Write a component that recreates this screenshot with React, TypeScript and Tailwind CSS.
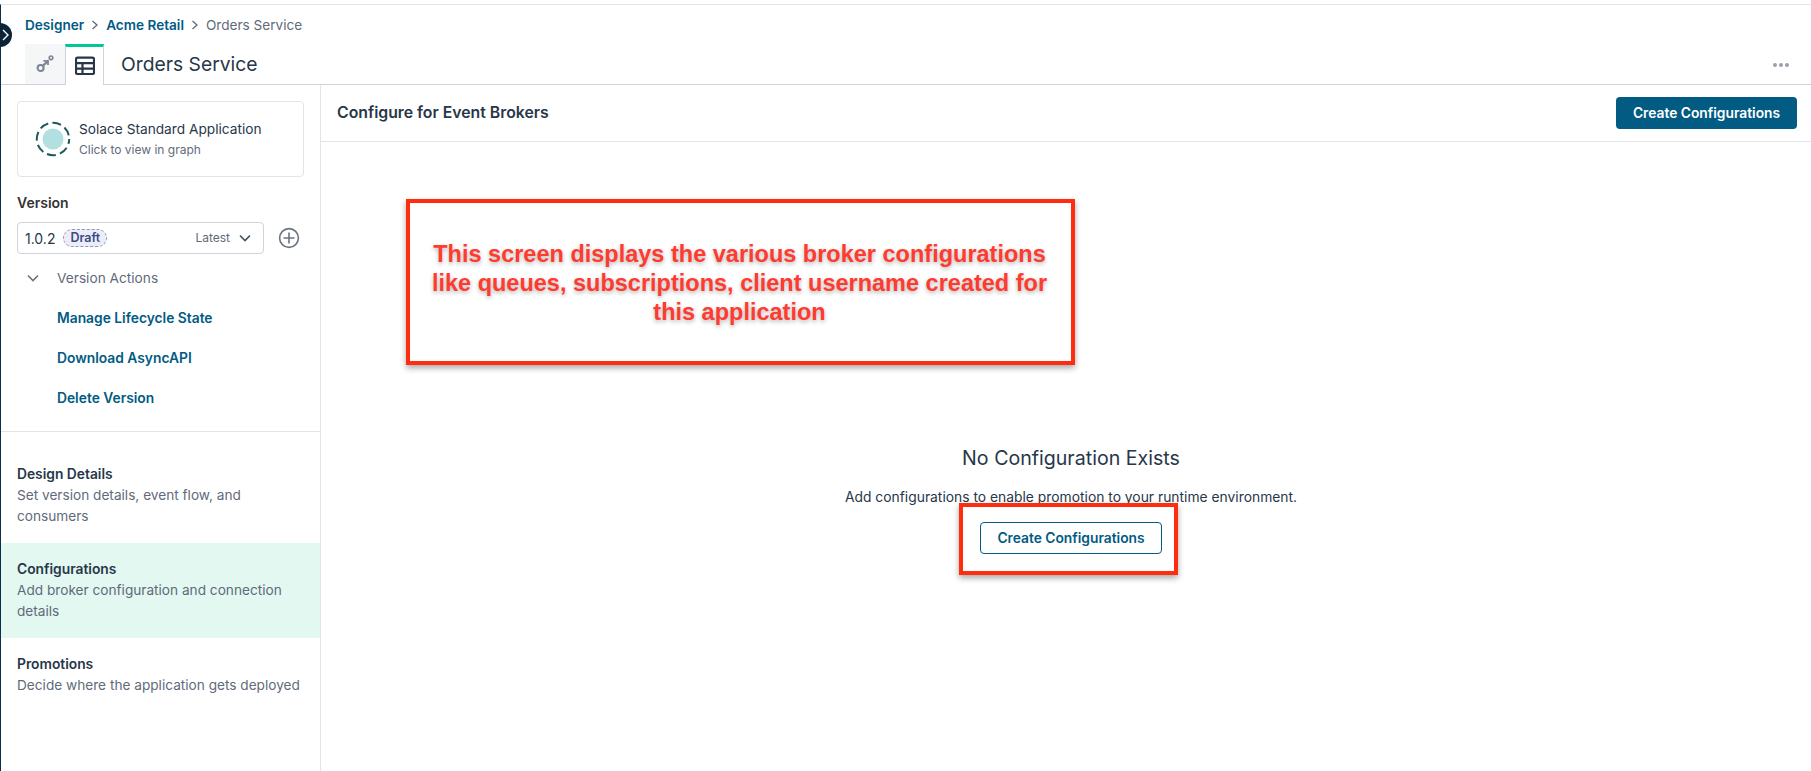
function GraphIcon() {
  return (
    <svg width="20" height="20" viewBox="0 0 20 20" fill="none" stroke="#7d8794" strokeWidth="2.1">
      <circle cx="5.6" cy="14" r="3" />
      <circle cx="16" cy="3.8" r="1.8" strokeWidth="1.6" />
      <path d="M8 11.6 L12.4 7.6" />
      <path d="M8.4 6.8 H13 V11" strokeWidth="1.8" />
    </svg>
  );
}

function TableIcon() {
  return (
    <svg width="20" height="20" viewBox="0 0 20 20" fill="none" stroke="#273749" strokeWidth="2.2">
      <rect x="1" y="1.6" width="18" height="16.4" rx="1.5" />
      <path d="M1 7.2H19M1 12.6H19M7.5 7.2V18" />
    </svg>
  );
}

function Chevron({ color = "#5f6b7a", size = 12 }: { color?: string; size?: number }) {
  return (
    <svg width={size} height={size} viewBox="0 0 12 12" fill="none" stroke={color} strokeWidth="1.6">
      <path d="M1 3.5 L6 8.5 L11 3.5" />
    </svg>
  );
}

function Sep() {
  return (
    <svg width="8" height="10" viewBox="0 0 8 10" fill="none" stroke="#5f6b7a" strokeWidth="1.3" className="mx-[7px]">
      <path d="M1.5 1 L6 5 L1.5 9" />
    </svg>
  );
}

function StandardIcon() {
  return (
    <svg width="36" height="36" viewBox="0 0 36 36" fill="none">
      <circle cx="18" cy="18" r="10.5" fill="#b2dfdf" />
      <circle cx="18" cy="18" r="16.2" stroke="#1d5b5e" strokeWidth="2" strokeDasharray="9 4.2" strokeDashoffset="4" />
    </svg>
  );
}

function NavItem({ title, lines, active }: { title: string; lines: string[]; active?: boolean }) {
  return (
    <div className={`pl-4 pr-2 pt-[16px] pb-[16px] ${active ? "bg-[#e3f8f1]" : ""}`}>
      <div className="text-[13.8px] leading-[21px] font-semibold text-[#273749]">{title}</div>
      <div className="text-[13.65px] leading-[21px] text-[#5f6b7a]">
        {lines.map((l) => (
          <div key={l}>{l}</div>
        ))}
      </div>
    </div>
  );
}

export default function App() {
  return (
    <div className="relative h-screen w-full overflow-hidden bg-white font-['Inter',sans-serif] text-[#273749] pt-1">
      <div className="flex h-full flex-col border-t border-[#e2e4e8] border-l border-l-[#0c2f4e]">
        <header className="relative h-[80px] shrink-0 border-b border-[#d0d3dc]">
          <div className="flex h-[39px] items-center pl-[24px] text-[13.6px] leading-[20px]">
            <span className="font-semibold text-[#015b82]">Designer</span>
            <Sep />
            <span className="font-semibold text-[#015b82]">Acme Retail</span>
            <Sep />
            <span className="text-[#5f6b7a]">Orders Service</span>
          </div>
          <div className="flex h-10 items-stretch pl-[24px]">
            <div className="flex w-10 items-center justify-center bg-[#f5f6f8]"><GraphIcon /></div>
            <div className="relative -mb-px flex w-[39px] items-center justify-center border-x border-[#d0d3dc] border-t-[3px] border-t-[#00c895] bg-white"><TableIcon /></div>
            <div className="flex items-center pl-[17px] text-[19.3px] leading-[28px] text-[#273749]">Orders Service</div>
            <div className="ml-auto mr-[22px] flex items-center gap-[2px] pt-[2px]">
              <span className="h-[4px] w-[4px] rounded-full bg-[#9aa1ad]" />
              <span className="h-[4px] w-[4px] rounded-full bg-[#9aa1ad]" />
              <span className="h-[4px] w-[4px] rounded-full bg-[#9aa1ad]" />
            </div>
          </div>
        </header>
        <div className="flex min-h-0 flex-1">
          <aside className="w-[320px] shrink-0 border-r border-[#e2e4e8]">
            <div className="h-[347px] border-b border-[#e2e4e8] pt-4">
              <div className="mx-[16px] flex h-[76px] w-[287px] items-center gap-[8px] rounded border border-[#e2e4e8] pl-[17px]">
                <StandardIcon />
                <div className="pb-[1px]">
                  <div className="text-[13.7px] leading-[20px] text-[#273749]">Solace Standard Application</div>
                  <div className="mt-[2px] text-[12px] leading-[18px] text-[#5f6b7a]">Click to view in graph</div>
                </div>
              </div>
              <div className="mx-[16px] mt-[16px] text-[14px] leading-[20px] font-semibold text-[#333]">Version</div>
              <div className="mt-[9px] flex items-center pl-[16px]">
                <div className="flex h-[32px] w-[247px] items-center rounded border border-[#d0d3dc] pl-[7px] pr-3">
                  <span className="text-[14px] text-[#273749]">1.0.2</span>
                  <span className="ml-[8px] rounded-full border border-dashed border-[#8f95bd] bg-[#eceef7] px-[6px] text-[12.5px] leading-[16px] font-semibold text-[#3d4a8a]">Draft</span>
                  <span className="ml-auto text-[12px] text-[#5f6b7a]">Latest</span>
                  <span className="ml-[9px]"><Chevron color="#444f5c" /></span>
                </div>
                <svg width="22" height="22" viewBox="0 0 22 22" fill="none" stroke="#6b7480" strokeWidth="1.6" className="ml-[14px]">
                  <circle cx="11" cy="11" r="9.4" />
                  <path d="M11 5.5V16.5M5.5 11H16.5" />
                </svg>
              </div>
              <div className="mt-[14px] flex items-center pl-[26px] text-[13.7px] leading-[20px] text-[#5f6b7a]">
                <Chevron color="#6b7480" />
                <span className="ml-[18px]">Version Actions</span>
              </div>
              <div className="mt-[20px] flex flex-col gap-[20px] pl-[56px] text-[13.8px] leading-[20px] font-semibold text-[#015b82]">
                <div>Manage Lifecycle State</div>
                <div>Download AsyncAPI</div>
                <div>Delete Version</div>
              </div>
            </div>
            <div className="pt-[16px]">
              <NavItem title="Design Details" lines={["Set version details, event flow, and", "consumers"]} />
              <NavItem active title="Configurations" lines={["Add broker configuration and connection", "details"]} />
              <NavItem title="Promotions" lines={["Decide where the application gets deployed"]} />
            </div>
          </aside>
          <main className="flex min-w-0 flex-1 flex-col">
            <div className="flex h-[57px] shrink-0 items-center justify-between border-b border-[#e2e4e8] pl-4 pr-[14px]">
              <div className="text-[15.8px] font-semibold text-[#273749]">Configure for Event Brokers</div>
              <button className="flex h-[32px] w-[181px] items-center justify-center rounded bg-[#015b82] text-[13.8px] font-semibold text-white">Create Configurations</button>
            </div>
            <div className="flex flex-1 flex-col items-center pl-[10px] pt-[301px]">
              <div className="text-[19.6px] leading-[30px] text-[#273749]">No Configuration Exists</div>
              <div className="mt-[14px] text-[13.85px] leading-[21px] text-[#273749]">Add configurations to enable promotion to your runtime environment.</div>
              <button className="mt-[14px] flex h-[32px] w-[182px] items-center justify-center rounded border border-[#015b82] text-[13.8px] font-semibold text-[#015b82]">Create Configurations</button>
            </div>
          </main>
        </div>
      </div>

      <div className="absolute left-0 top-[23px] flex h-[24px] w-[12px] items-center justify-end rounded-r-full bg-[#0c2438] pr-[3px]">
        <svg width="7" height="12" viewBox="0 0 7 12" fill="none" stroke="#fff" strokeWidth="1.4">
          <path d="M1 1 L6 6 L1 11" />
        </svg>
      </div>

      <div className="absolute left-[406px] top-[199px] flex h-[166px] w-[669px] items-center justify-center border-[4px] border-[#ff2d0f] bg-white text-center font-['Liberation_Sans',sans-serif] text-[23.5px] leading-[29px] font-bold text-[#ff3b30] shadow-[0_3px_6px_rgba(0,0,0,0.35)] [text-shadow:0_2px_4px_rgba(0,0,0,0.3)]">
        <div className="pt-[2px] pr-[2px]">
          This screen displays the various broker configurations<br />
          like queues, subscriptions, client username created for<br />
          this application
        </div>
      </div>
      <div className="absolute left-[959px] top-[503px] h-[72px] w-[219px] border-[4px] border-[#ff2d0f] shadow-[0_3px_6px_rgba(0,0,0,0.35)]" />
    </div>
  );
}
